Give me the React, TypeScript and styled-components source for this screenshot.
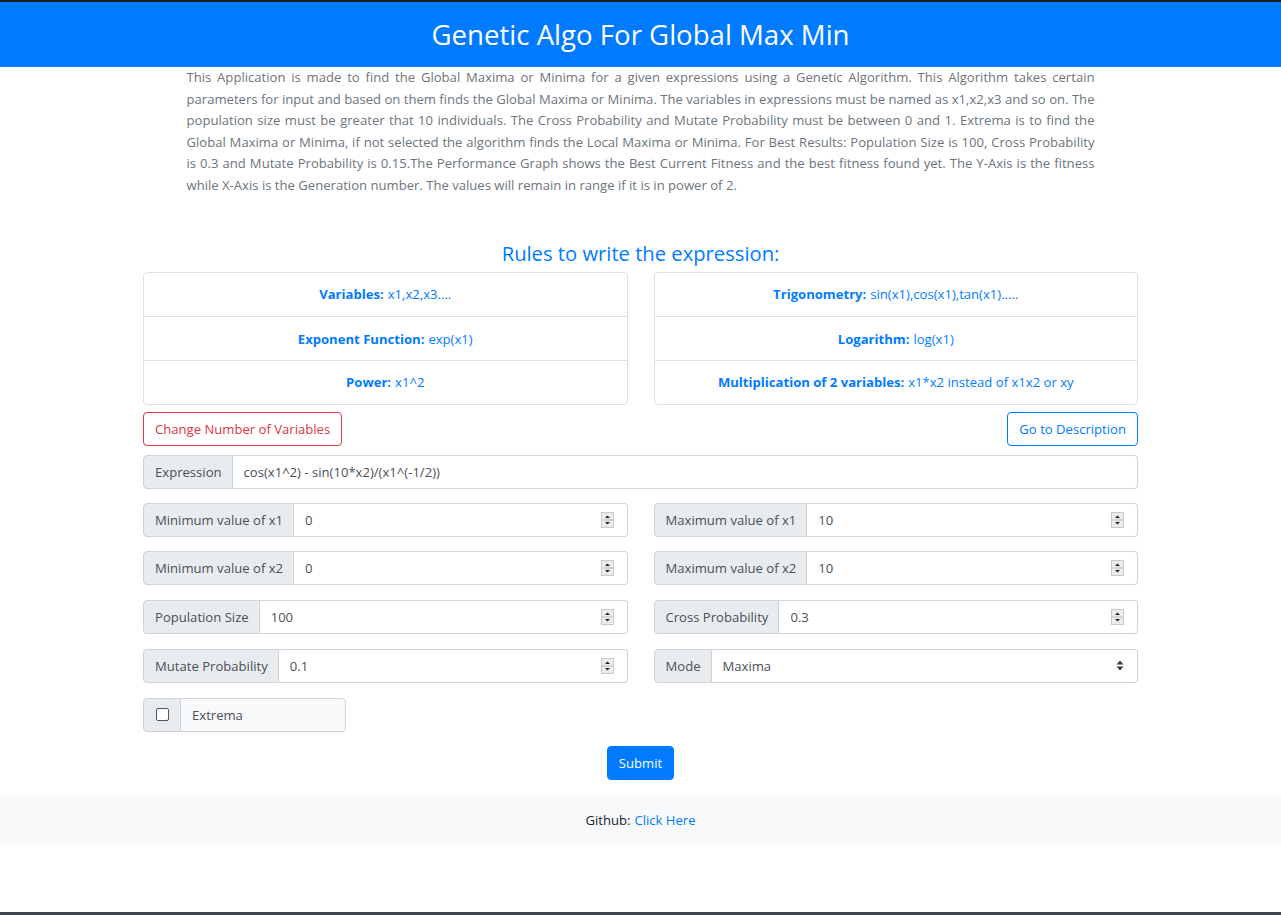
import React from 'react'
import styled, { createGlobalStyle } from 'styled-components'

const GlobalStyle = createGlobalStyle`
  body {
    margin: 0;
    background: #fff;
    font-family: "Open Sans", "Noto Sans", sans-serif;
    font-size: 13.1px;
    color: #212529;
  }
  * { box-sizing: border-box; }
`

const Header = styled.header`
  background: #007bff;
  border-top: 2px solid #1f1f1f;
  height: 67px;
  display: flex;
  align-items: center;
  justify-content: center;
`
const Title = styled.h1`
  margin: 0;
  color: #fff;
  font-weight: 400;
  font-size: 27.6px;
  line-height: 1;
`
const Description = styled.p`
  width: 908px;
  margin: 0 auto;
  color: #6c757d;
  font-size: 13.1px;
  text-align: justify;
  line-height: 21.6px;
`
const Main = styled.main`
  width: 995px;
  margin: 0 auto;
`
const RulesTitle = styled.h3`
  margin: 43px 0 5px;
  text-align: center;
  color: #007bff;
  font-weight: 400;
  font-size: 20.2px;
  line-height: 27px;
`
const RulesGrid = styled.div`
  display: grid;
  grid-template-columns: 1fr 1fr;
  column-gap: 26px;
`
const ListGroup = styled.ul`
  margin: 0;
  padding: 0;
  list-style: none;
  border: 1px solid rgba(0, 0, 0, 0.125);
  border-radius: 4px;
`
const ListItem = styled.li`
  height: 43.7px;
  display: flex;
  align-items: center;
  justify-content: center;
  color: #007bff;
  & + & {
    border-top: 1px solid rgba(0, 0, 0, 0.125);
  }
  b { font-weight: 700; margin-right: 4px; }
`
const ButtonRow = styled.div`
  display: flex;
  justify-content: space-between;
  margin-top: 7px;
`
const OutlineButton = styled.button<{ $tone: string }>`
  height: 34px;
  padding: 0 11px;
  font: inherit;
  color: ${({ $tone }) => $tone};
  background: #fff;
  border: 1px solid ${({ $tone }) => $tone};
  border-radius: 4px;
`
const InputGroup = styled.div<{ $width?: string }>`
  display: flex;
  height: 34px;
  width: ${({ $width }) => $width || '100%'};
  color: #495057;
`
const Addon = styled.span`
  display: flex;
  align-items: center;
  padding: 0 10px 0 11px;
  background: #e9ecef;
  border: 1px solid #ced4da;
  border-radius: 4px 0 0 4px;
  white-space: nowrap;
`
const Field = styled.div`
  flex: 1;
  display: flex;
  align-items: center;
  justify-content: space-between;
  padding: 0 13px 0 11px;
  border: 1px solid #ced4da;
  border-left: none;
  border-radius: 0 4px 4px 0;
  background: #fff;
`
const LightField = styled(Field)`
  background: #f8f9fa;
  border-left: 1px solid #ced4da;
  margin-left: -1px;
`
const Checkbox = styled.span`
  width: 13px;
  height: 13px;
  border: 1px solid #555;
  border-radius: 2px;
  background: #fff;
  margin: 0 1px;
`
const FieldGrid = styled.div`
  display: grid;
  grid-template-columns: 1fr 1fr;
  column-gap: 26px;
  row-gap: 14.7px;
  margin-top: 14px;
`
const ExtremaRow = styled.div`
  margin-top: 15px;
`
const SubmitRow = styled.div`
  display: flex;
  justify-content: center;
  margin-top: 14px;
`
const SubmitButton = styled.button`
  height: 34px;
  padding: 0 11px;
  font: inherit;
  color: #fff;
  background: #007bff;
  border: 1px solid #007bff;
  border-radius: 4px;
`
const Footer = styled.footer`
  margin-top: 15px;
  height: 50px;
  background: #f8f9fa;
  display: flex;
  align-items: center;
  justify-content: center;
  a { color: #007bff; text-decoration: none; margin-left: 4px; }
`
const Taskbar = styled.div`
  position: fixed;
  left: 0;
  right: 0;
  bottom: 0;
  height: 3px;
  background: #3c4654;
`

const Spinner = () => (
  <svg width="13" height="16" viewBox="0 0 13 16">
    <rect x="0.5" y="0.5" width="12" height="15" fill="#ececec" stroke="#c9c9c9" />
    <line x1="1" y1="8" x2="12" y2="8" stroke="#bdbdbd" />
    <path d="M6.5 3.5 L9 6 L4 6 Z" fill="#222" />
    <path d="M4 10 L9 10 L6.5 12.5 Z" fill="#222" />
  </svg>
)

const SelectArrows = () => (
  <svg width="8" height="11" viewBox="0 0 8 11">
    <path d="M4 0.5 L7.5 4.5 L0.5 4.5 Z" fill="#343a40" />
    <path d="M0.5 6.5 L7.5 6.5 L4 10.5 Z" fill="#343a40" />
  </svg>
)

const rulesLeft = [
  ['Variables:', 'x1,x2,x3....'],
  ['Exponent Function:', 'exp(x1)'],
  ['Power:', 'x1^2'],
]
const rulesRight = [
  ['Trigonometry:', 'sin(x1),cos(x1),tan(x1).....'],
  ['Logarithm:', 'log(x1)'],
  ['Multiplication of 2 variables:', 'x1*x2 instead of x1x2 or xy'],
]
const fields = [
  ['Minimum value of x1', '0'],
  ['Maximum value of x1', '10'],
  ['Minimum value of x2', '0'],
  ['Maximum value of x2', '10'],
  ['Population Size', '100'],
  ['Cross Probability', '0.3'],
  ['Mutate Probability', '0.1'],
]

const App = (): JSX.Element => (
  <>
    <GlobalStyle />
    <Header>
      <Title>Genetic Algo For Global Max Min</Title>
    </Header>
    <Description>
      This Application is made to find the Global Maxima or Minima for a given
      expressions using a Genetic Algorithm. This Algorithm takes certain
      parameters for input and based on them finds the Global Maxima or
      Minima. The variables in expressions must be named as x1,x2,x3 and so
      on. The population size must be greater that 10 individuals. The Cross
      Probability and Mutate Probability must be between 0 and 1. Extrema is
      to find the Global Maxima or Minima, if not selected the algorithm finds
      the Local Maxima or Minima. For Best Results: Population Size is 100,
      Cross Probability is 0.3 and Mutate Probability is 0.15.The Performance
      Graph shows the Best Current Fitness and the best fitness found yet. The
      Y-Axis is the fitness while X-Axis is the Generation number. The values
      will remain in range if it is in power of 2.
    </Description>
    <Main>
      <RulesTitle>Rules to write the expression:</RulesTitle>
      <RulesGrid>
        {[rulesLeft, rulesRight].map((list, i) => (
          <ListGroup key={i}>
            {list.map(([label, value]) => (
              <ListItem key={label}>
                <b>{label}</b>
                {value}
              </ListItem>
            ))}
          </ListGroup>
        ))}
      </RulesGrid>
      <ButtonRow>
        <OutlineButton $tone="#dc3545">Change Number of Variables</OutlineButton>
        <OutlineButton $tone="#007bff">Go to Description</OutlineButton>
      </ButtonRow>
      <InputGroup style={{ marginTop: 9 }}>
        <Addon>Expression</Addon>
        <Field>cos(x1^2) - sin(10*x2)/(x1^(-1/2))</Field>
      </InputGroup>
      <FieldGrid>
        {fields.map(([label, value]) => (
          <InputGroup key={label}>
            <Addon>{label}</Addon>
            <Field>
              <span>{value}</span>
              <Spinner />
            </Field>
          </InputGroup>
        ))}
        <InputGroup>
          <Addon>Mode</Addon>
          <Field>
            <span>Maxima</span>
            <SelectArrows />
          </Field>
        </InputGroup>
      </FieldGrid>
      <ExtremaRow>
        <InputGroup $width="203px">
          <Addon>
            <Checkbox />
          </Addon>
          <LightField>Extrema</LightField>
        </InputGroup>
      </ExtremaRow>
      <SubmitRow>
        <SubmitButton>Submit</SubmitButton>
      </SubmitRow>
    </Main>
    <Footer>
      Github: <a href="#">Click Here</a>
    </Footer>
    <Taskbar />
  </>
)

export default App
